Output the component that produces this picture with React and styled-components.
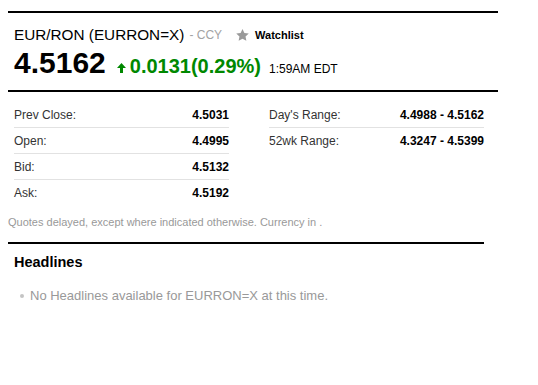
import React from "react";
import styled, { createGlobalStyle } from "styled-components";

const GlobalStyle = createGlobalStyle`
  html, body {
    margin: 0;
    padding: 0;
    background: #fff;
    font-family: "Liberation Sans", Arial, sans-serif;
  }
`;

const Page = styled.div`
  width: 490px;
  padding: 11px 0 0 8px;
`;

const Header = styled.div`
  border-top: 2px solid #000;
  border-bottom: 2px solid #000;
  padding: 13px 6px 10px;
`;

const TitleRow = styled.div`
  display: flex;
  align-items: center;
  height: 18px;
  margin-bottom: 2px;
`;

const Title = styled.h2`
  margin: 0;
  font-size: 15.3px;
  font-weight: normal;
  color: #000;
`;

const Exchange = styled.span`
  margin-left: 5px;
  font-size: 12px;
  color: #a3a3a3;
`;

const Watch = styled.span`
  display: flex;
  align-items: center;
  margin-left: 14px;
  font-size: 11px;
  font-weight: bold;
  color: #000;
  gap: 6px;
`;

const PriceRow = styled.div`
  display: flex;
  align-items: baseline;
  height: 34px;
`;

const Price = styled.span`
  font-size: 30px;
  font-weight: bold;
  color: #000;
  line-height: 34px;
`;

const Change = styled.span`
  display: flex;
  align-items: baseline;
  margin-left: 11px;
  font-size: 20px;
  font-weight: bold;
  color: #008800;
  gap: 4px;
`;

const Time = styled.span`
  margin-left: 8px;
  font-size: 12px;
  color: #000;
`;

const Tables = styled.div`
  display: flex;
  gap: 40px;
  padding: 10px 14px 0 6px;
`;

const Table = styled.div`
  width: 215px;
`;

const Row = styled.div`
  display: flex;
  justify-content: space-between;
  align-items: center;
  height: 25px;
  border-bottom: 1px solid ${(p) => (p.$last ? "transparent" : "#e2e2e2")};
  font-size: 12px;
`;

const Label = styled.span`
  color: #333;
`;

const Value = styled.span`
  font-weight: bold;
  color: #000;
`;

const Note = styled.p`
  margin: 10px 0 0;
  font-size: 11px;
  line-height: 13px;
  color: #999;
`;

const Headlines = styled.div`
  box-sizing: border-box;
  width: 476px;
  margin-top: 13px;
  border-top: 2px solid #000;
  padding: 10px 6px 0;
`;

const HeadTitle = styled.h3`
  margin: 0;
  font-size: 14.5px;
  line-height: 17px;
  font-weight: bold;
  color: #000;
`;

const List = styled.ul`
  margin: 17px 0 0;
  padding: 0 0 0 16px;
  list-style: none;
`;

const Item = styled.li`
  position: relative;
  font-size: 13px;
  line-height: 15px;
  color: #999;
  &::before {
    content: "";
    position: absolute;
    left: -10px;
    top: 6px;
    width: 4px;
    height: 4px;
    border-radius: 50%;
    background: #c4c4c4;
  }
`;

const Star = () => (
  <svg width="13" height="12" viewBox="0 0 24 23">
    <path d="M12 0l3.6 7.6 8.4 1-6.2 5.8 1.6 8.3L12 18.6 4.6 22.7l1.6-8.3L0 8.6l8.4-1z" fill="#9a9a9a" />
  </svg>
);

const Arrow = () => (
  <svg width="9" height="10" viewBox="0 0 9 10">
    <path d="M4.5 0L9 5H6v5H3V5H0z" fill="#008800" />
  </svg>
);

const left = [
  ["Prev Close:", "4.5031"],
  ["Open:", "4.4995"],
  ["Bid:", "4.5132"],
  ["Ask:", "4.5192"],
];

const right = [
  ["Day's Range:", "4.4988 - 4.5162"],
  ["52wk Range:", "4.3247 - 4.5399"],
];

export default function App() {
  return (
    <Page>
      <GlobalStyle />
      <Header>
        <TitleRow>
          <Title>EUR/RON (EURRON=X)</Title>
          <Exchange>- CCY</Exchange>
          <Watch>
            <Star />
            Watchlist
          </Watch>
        </TitleRow>
        <PriceRow>
          <Price>4.5162</Price>
          <Change>
            <Arrow />
            0.0131(0.29%)
          </Change>
          <Time>1:59AM EDT</Time>
        </PriceRow>
      </Header>
      <Tables>
        <Table>
          {left.map(([l, v], i) => (
            <Row key={l} $last={i === left.length - 1}>
              <Label>{l}</Label>
              <Value>{v}</Value>
            </Row>
          ))}
        </Table>
        <Table>
          {right.map(([l, v], i) => (
            <Row key={l} $last={i === right.length - 1}>
              <Label>{l}</Label>
              <Value>{v}</Value>
            </Row>
          ))}
        </Table>
      </Tables>
      <Note>Quotes delayed, except where indicated otherwise. Currency in .</Note>
      <Headlines>
        <HeadTitle>Headlines</HeadTitle>
        <List>
          <Item>No Headlines available for EURRON=X at this time.</Item>
        </List>
      </Headlines>
    </Page>
  );
}
